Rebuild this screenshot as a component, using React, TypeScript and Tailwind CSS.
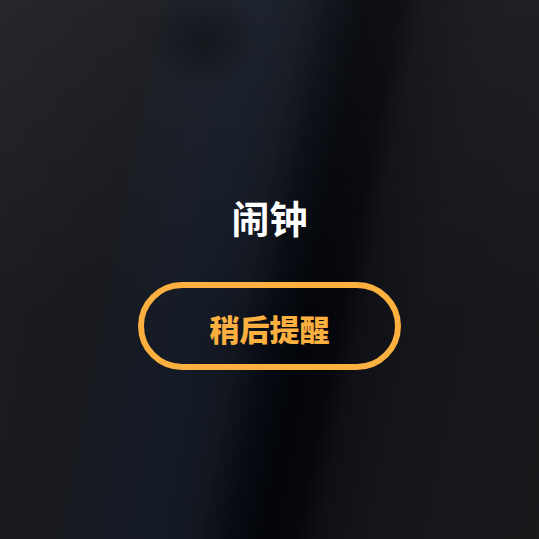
import React from "react";

const App = () => {
  return (
    <div
      className="relative min-h-[539px] w-full overflow-hidden bg-[linear-gradient(101deg,#1d1e21_0%,#18191c_24%,#161a23_28%,#151b26_40%,#11161f_47%,#080b12_52%,#03050a_57%,#05070c_62%,#0f1016_66%,#151619_75%,#19191c_100%)]"
      style={{ fontFamily: '"Noto Sans CJK SC", "Noto Sans", sans-serif' }}
    >
      {/* soft light on top of the wallpaper */}
      <div className="pointer-events-none absolute inset-0 bg-[linear-gradient(180deg,rgba(255,255,255,0.04)_0%,rgba(255,255,255,0.02)_30%,rgba(0,0,0,0)_60%)]" />
      <div className="pointer-events-none absolute inset-0 bg-[radial-gradient(ellipse_60px_50px_at_205px_40px,rgba(10,10,12,0.5),rgba(0,0,0,0))]" />

      <div className="relative flex flex-col items-center pt-[198px]">
        <h1 className="text-[38px] font-bold leading-none text-white">闹钟</h1>

        <button
          type="button"
          className="mt-[46px] flex h-[88px] w-[263px] items-center justify-center rounded-full border-[6px] border-[#fbb040] pt-1"
        >
          <span className="text-[30px] font-black leading-none text-[#fbb040]">
            稍后提醒
          </span>
        </button>
      </div>
    </div>
  );
};

export default App;
